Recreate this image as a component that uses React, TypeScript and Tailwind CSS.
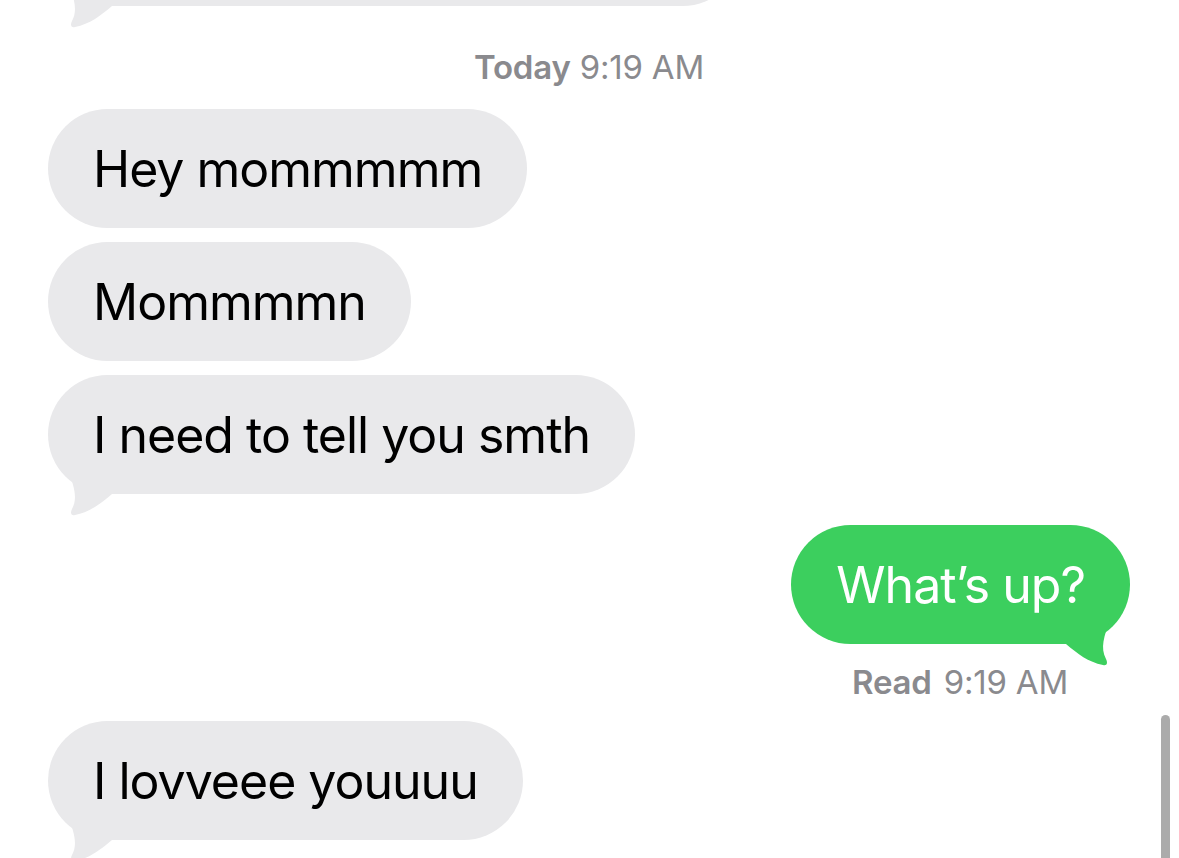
const font = { fontFamily: 'Inter, "Noto Sans", sans-serif' }

function Tail({ side, color }: { side: 'left' | 'right'; color: string }) {
  return (
    <svg
      width="70"
      height="46"
      viewBox="0 -24 70 46"
      className={side === 'left' ? 'absolute left-0 -bottom-[22px]' : 'absolute right-0 -bottom-[22px] -scale-x-100'}
    >
      <path
        d="M20 -24 C26 -8 30 4 24 15 C22 19 23 22 27 21 C42 18 52 10 64 0 L64 -24 Z"
        fill={color}
      />
    </svg>
  )
}

interface BubbleProps {
  text: string
  me?: boolean
  tail?: boolean
  className?: string
}

function Bubble({ text, me, tail, className = '' }: BubbleProps) {
  const color = me ? '#3ccf5e' : '#e9e9eb'
  return (
    <div className={`flex ${me ? 'justify-end' : 'justify-start'} ${className}`}>
      <div
        className={`relative h-[119px] rounded-[60px] flex items-center px-[45px] text-[50px] leading-none whitespace-nowrap ${
          me ? 'bg-[#3ccf5e] text-white' : 'bg-[#e9e9eb] text-black'
        }`}
      >
        {tail && <Tail side={me ? 'right' : 'left'} color={color} />}
        <span className="relative tracking-[-1px]">{text}</span>
      </div>
    </div>
  )
}

export default function App() {
  return (
    <div className="relative w-[1179px] h-[858px] overflow-hidden bg-white" style={font}>
      <div className="flex flex-col pl-[48px] pr-[49px]">
        <div className="-mt-[113px]">
          <div className="relative h-[119px] w-[694px] rounded-[60px] bg-[#e9e9eb]">
            <Tail side="left" color="#e9e9eb" />
          </div>
        </div>

        <div className="mt-[42px] h-[40px] flex items-center justify-center text-[33px] text-[#8a8a8e] tracking-[-0.2px]">
          <span className="font-semibold">Today</span>
          <span className="ml-[9px]">9:19 AM</span>
        </div>

        <Bubble className="mt-[21px]" text="Hey mommmmm" />
        <Bubble className="mt-[14px]" text="Mommmmn" />
        <Bubble className="mt-[14px]" text="I need to tell you smth" tail />

        <Bubble className="mt-[31px]" text="What’s up?" me tail />

        <div className="mt-[19px] h-[40px] flex items-center justify-end pr-[62px] text-[33px] text-[#8a8a8e] tracking-[-0.2px]">
          <span className="font-semibold">Read</span>
          <span className="ml-[12px]">9:19 AM</span>
        </div>

        <Bubble className="mt-[18px]" text="I lovveee youuuu" tail />
      </div>

      <div className="absolute left-[1161px] top-[715px] w-[9px] h-[160px] rounded-t-full bg-[#ababab]" />
    </div>
  )
}
